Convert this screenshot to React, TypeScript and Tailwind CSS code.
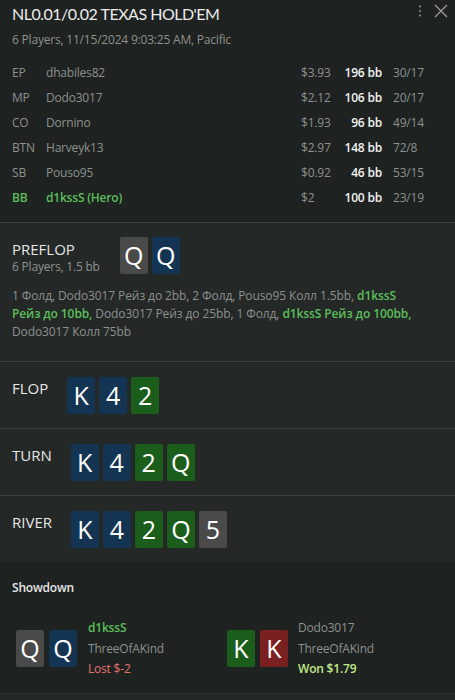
import React from "react";

type CardColor = "grey" | "blue" | "green" | "red";

const cardBg: Record<CardColor, string> = {
  grey: "bg-[#4a4a4a]",
  blue: "bg-[#143453]",
  green: "bg-[#1b5e1b]",
  red: "bg-[#7b2020]",
};

function Card({ r, c }: { r: string; c: CardColor }) {
  return (
    <div
      className={`w-[28px] h-[37px] rounded-[2px] flex items-center justify-center text-white text-[25px] leading-none ${cardBg[c]}`}
    >
      {r}
    </div>
  );
}

const players = [
  { pos: "EP", name: "dhabiles82", money: "$3.93", bb: "196 bb", st: "30/17" },
  { pos: "MP", name: "Dodo3017", money: "$2.12", bb: "106 bb", st: "20/17" },
  { pos: "CO", name: "Dornino", money: "$1.93", bb: "96 bb", st: "49/14" },
  { pos: "BTN", name: "Harveyk13", money: "$2.97", bb: "148 bb", st: "72/8" },
  { pos: "SB", name: "Pouso95", money: "$0.92", bb: "46 bb", st: "53/15" },
  { pos: "BB", name: "d1kssS (Hero)", money: "$2", bb: "100 bb", st: "23/19", hero: true },
];

function Street({ label, cards }: { label: string; cards: [string, CardColor][] }) {
  return (
    <div className="border-t border-[#3a3e3c] bg-[#242827] px-3 pt-[15px] pb-[14px] flex items-start gap-[19px]">
      <div className="text-[15px] leading-[20px] text-[#e6e6e6] mt-[1px]">{label}</div>
      <div className="flex gap-[4px]">
        {cards.map(([r, c], i) => (
          <Card key={i} r={r} c={c} />
        ))}
      </div>
    </div>
  );
}

export default function App() {
  return (
    <div
      className="w-[455px] h-[700px] overflow-hidden bg-[#1e2220] flex flex-col"
      style={{ fontFamily: '"Open Sans", "Noto Sans", sans-serif' }}
    >
      {/* Header */}
      <div className="relative px-3 pt-[3px] pb-[12px]">
        <div
          className="text-[16px] leading-[22px] text-[#ececec] tracking-[-0.5px]"
          style={{ fontFamily: 'Lato, "Open Sans", sans-serif' }}
        >
          NL0.01/0.02 TEXAS HOLD'EM
        </div>
        <div className="mt-[7px] text-[12px] leading-[16px] text-[#8d918f] tracking-[-0.2px]">
          6 Players, 11/15/2024 9:03:25 AM, Pacific
        </div>
        <div className="absolute right-[7px] top-[4px] flex items-center gap-[12px]">
          <svg width="4" height="14" viewBox="0 0 4 14">
            <circle cx="2" cy="2.5" r="1.1" fill="#8a8d8c" />
            <circle cx="2" cy="7" r="1.1" fill="#8a8d8c" />
            <circle cx="2" cy="11.5" r="1.1" fill="#8a8d8c" />
          </svg>
          <svg width="14" height="14" viewBox="0 0 14 14">
            <path d="M1 1 L13 13 M13 1 L1 13" stroke="#9a9d9c" strokeWidth="1.3" />
          </svg>
        </div>
        <div className="mt-[12px] flex flex-col text-[12px] tracking-[-0.2px]">
          {players.map((p) => (
            <div key={p.pos} className="h-[25px] flex items-center">
              <div
                className={`w-[34px] ${p.hero ? "text-[#5cbf5c] font-semibold" : "text-[#8d918f]"}`}
              >
                {p.pos}
              </div>
              <div className={`flex-1 ${p.hero ? "text-[#5cbf5c] font-semibold" : "text-[#8d918f]"}`}>
                {p.name}
              </div>
              <div className="w-[41px] text-[#8d918f]">{p.money}</div>
              <div className="w-[40px] text-right text-[#f2f2f2] font-semibold">{p.bb}</div>
              <div className="w-[50px] ml-[11px] text-[#8d918f]">{p.st}</div>
            </div>
          ))}
        </div>
      </div>

      {/* Preflop */}
      <div className="border-t border-[#3a3e3c] bg-[#242827] px-3 pt-[14px] pb-[20px]">
        <div className="flex items-start gap-[20px]">
          <div className="mt-[2px]">
            <div className="text-[15px] leading-[20px] text-[#e6e6e6]">PREFLOP</div>
            <div className="text-[12px] leading-[16px] text-[#8d918f] tracking-[-0.2px]">6 Players, 1.5 bb</div>
          </div>
          <div className="flex gap-[4px]">
            <Card r="Q" c="grey" />
            <Card r="Q" c="blue" />
          </div>
        </div>
        <div className="mt-[12px] pr-[30px] text-[12px] leading-[18px] text-[#8d918f] tracking-[-0.1px]">
          1 Фолд, Dodo3017 Рейз до 2bb, 2 Фолд, Pouso95 Колл 1.5bb,{" "}
          <span className="text-[#5cbf5c] font-semibold">d1kssS Рейз до 10bb,</span> Dodo3017 Рейз до 25bb, 1
          Фолд, <span className="text-[#5cbf5c] font-semibold">d1kssS Рейз до 100bb,</span> Dodo3017 Колл 75bb
        </div>
      </div>

      <Street
        label="FLOP"
        cards={[
          ["K", "blue"],
          ["4", "blue"],
          ["2", "green"],
        ]}
      />
      <Street
        label="TURN"
        cards={[
          ["K", "blue"],
          ["4", "blue"],
          ["2", "green"],
          ["Q", "green"],
        ]}
      />
      <Street
        label="RIVER"
        cards={[
          ["K", "blue"],
          ["4", "blue"],
          ["2", "green"],
          ["Q", "green"],
          ["5", "grey"],
        ]}
      />

      {/* Showdown */}
      <div className="bg-[#1e2220] px-3 pt-[18px] pb-[13px]">
        <div className="text-[12px] leading-[16px] text-[#e6e6e6] font-semibold tracking-[-0.2px]">Showdown</div>
        <div className="mt-[22px] flex">
          <div className="w-[215px] pl-[4px] flex items-center gap-[11px]">
            <div className="flex gap-[5px]">
              <Card r="Q" c="grey" />
              <Card r="Q" c="blue" />
            </div>
            <div className="flex flex-col text-[12px] leading-[20.5px] tracking-[-0.2px]">
              <div className="text-[#5cbf5c] font-semibold">d1kssS</div>
              <div className="text-[#8d918f]">ThreeOfAKind</div>
              <div className="text-[#e5736e]">Lost $-2</div>
            </div>
          </div>
          <div className="flex items-center gap-[10px]">
            <div className="flex gap-[5px]">
              <Card r="K" c="green" />
              <Card r="K" c="red" />
            </div>
            <div className="flex flex-col text-[12px] leading-[20.5px] tracking-[-0.2px]">
              <div className="text-[#8d918f]">Dodo3017</div>
              <div className="text-[#8d918f]">ThreeOfAKind</div>
              <div className="text-[#c2e98a] font-semibold">Won $1.79</div>
            </div>
          </div>
        </div>
      </div>

      {/* Bottom strip */}
      <div className="flex-1 border-t border-[#2a302d] bg-[#222927] flex gap-[10px] pl-[200px] pt-[7px]">
        <div className="w-[125px] h-[10px] rounded-t-[3px] bg-[#3a3f3d]" />
        <div className="w-[96px] h-[10px] rounded-t-[3px] bg-[#3a3f3d]" />
      </div>
    </div>
  );
}
